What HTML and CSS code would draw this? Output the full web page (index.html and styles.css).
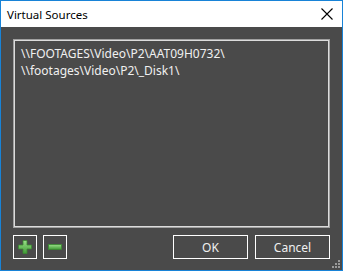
FILE: index.html
```html
<!DOCTYPE html>
<html lang="en">
<head>
    <meta charset="UTF-8">
    <title>Virtual Sources</title>
    <link rel="stylesheet" href="styles.css">
</head>
<body>
    <div class="window">
        <div class="titlebar">
            <span class="title">Virtual Sources</span>
            <svg class="close" width="12" height="12" viewBox="0 0 12 12">
                <path d="M0.5 0.5 L11.5 11.5 M11.5 0.5 L0.5 11.5" stroke="#000" stroke-width="1.1" fill="none"/>
            </svg>
        </div>
        <div class="content">
            <div class="source-list">
                <div class="source-item">\\FOOTAGES\Video\P2\AAT09H0732\</div>
                <div class="source-item">\\footages\Video\P2\_Disk1\</div>
            </div>
            <div class="bottom-row">
                <div class="icon-buttons">
                    <button class="icon-button" title="Add">
                        <svg width="14" height="14" viewBox="0 0 14 14">
                            <defs>
                                <linearGradient id="g1" x1="0" y1="0" x2="0" y2="1">
                                    <stop offset="0" stop-color="#9be08a"/>
                                    <stop offset="1" stop-color="#3f9a35"/>
                                </linearGradient>
                            </defs>
                            <path d="M5 0.5 H9 V5 H13.5 V9 H9 V13.5 H5 V9 H0.5 V5 H5 Z" fill="url(#g1)" stroke="#3b8a31" stroke-width="0.8"/>
                        </svg>
                    </button>
                    <button class="icon-button" title="Remove">
                        <svg width="14" height="6" viewBox="0 0 14 6">
                            <defs>
                                <linearGradient id="g2" x1="0" y1="0" x2="0" y2="1">
                                    <stop offset="0" stop-color="#9be08a"/>
                                    <stop offset="1" stop-color="#3f9a35"/>
                                </linearGradient>
                            </defs>
                            <rect x="0.5" y="0.5" width="13" height="5" fill="url(#g2)" stroke="#3b8a31" stroke-width="0.8"/>
                        </svg>
                    </button>
                </div>
                <div class="dialog-buttons">
                    <button class="text-button">OK</button>
                    <button class="text-button">Cancel</button>
                </div>
            </div>
            <svg class="grip" width="8" height="8" viewBox="0 0 8 8">
                <rect x="6" y="0" width="2" height="2" fill="#9a9a9a"/>
                <rect x="3" y="3" width="2" height="2" fill="#9a9a9a"/>
                <rect x="6" y="3" width="2" height="2" fill="#9a9a9a"/>
                <rect x="0" y="6" width="2" height="2" fill="#9a9a9a"/>
                <rect x="3" y="6" width="2" height="2" fill="#9a9a9a"/>
                <rect x="6" y="6" width="2" height="2" fill="#9a9a9a"/>
            </svg>
        </div>
    </div>
</body>
</html>
```
FILE: styles.css
```css
body {
    margin: 0;
    font-family: "Noto Sans", "Open Sans", sans-serif;
    font-size: 12px;
}
.window {
    width: 341px;
    height: 269px;
    border: 1px solid #1883d7;
    display: flex;
    flex-direction: column;
    background-color: #4a4a4a;
}
.titlebar {
    height: 26px;
    background-color: white;
    display: flex;
    align-items: center;
    justify-content: space-between;
    padding: 0 9px 0 6px;
}
.title {
    color: #000;
    font-size: 11.5px;
}
.close {
    display: block;
}
.content {
    flex: 1;
    position: relative;
    padding: 12px 12px 11px 12px;
    display: flex;
    flex-direction: column;
    gap: 7px;
}
.source-list {
    flex: 1;
    border: 1px solid #a0a0a0;
    box-shadow: inset 0 0 0 1px #dcdcdc;
    padding: 5px 7px;
    color: #f0f0f0;
    line-height: 17px;
}
.bottom-row {
    display: flex;
    justify-content: space-between;
}
.icon-buttons,
.dialog-buttons {
    display: flex;
}
.icon-buttons {
    gap: 6px;
}
.dialog-buttons {
    gap: 7px;
}
.icon-button,
.text-button {
    background-color: #4a4a4a;
    border: 1px solid #ffffff;
    color: #f0f0f0;
    height: 24px;
    padding: 0;
    font-family: inherit;
    font-size: 12px;
    display: flex;
    align-items: center;
    justify-content: center;
}
.icon-button {
    width: 24px;
}
.text-button {
    width: 75px;
}
.grip {
    position: absolute;
    right: 2px;
    bottom: 2px;
}
```
